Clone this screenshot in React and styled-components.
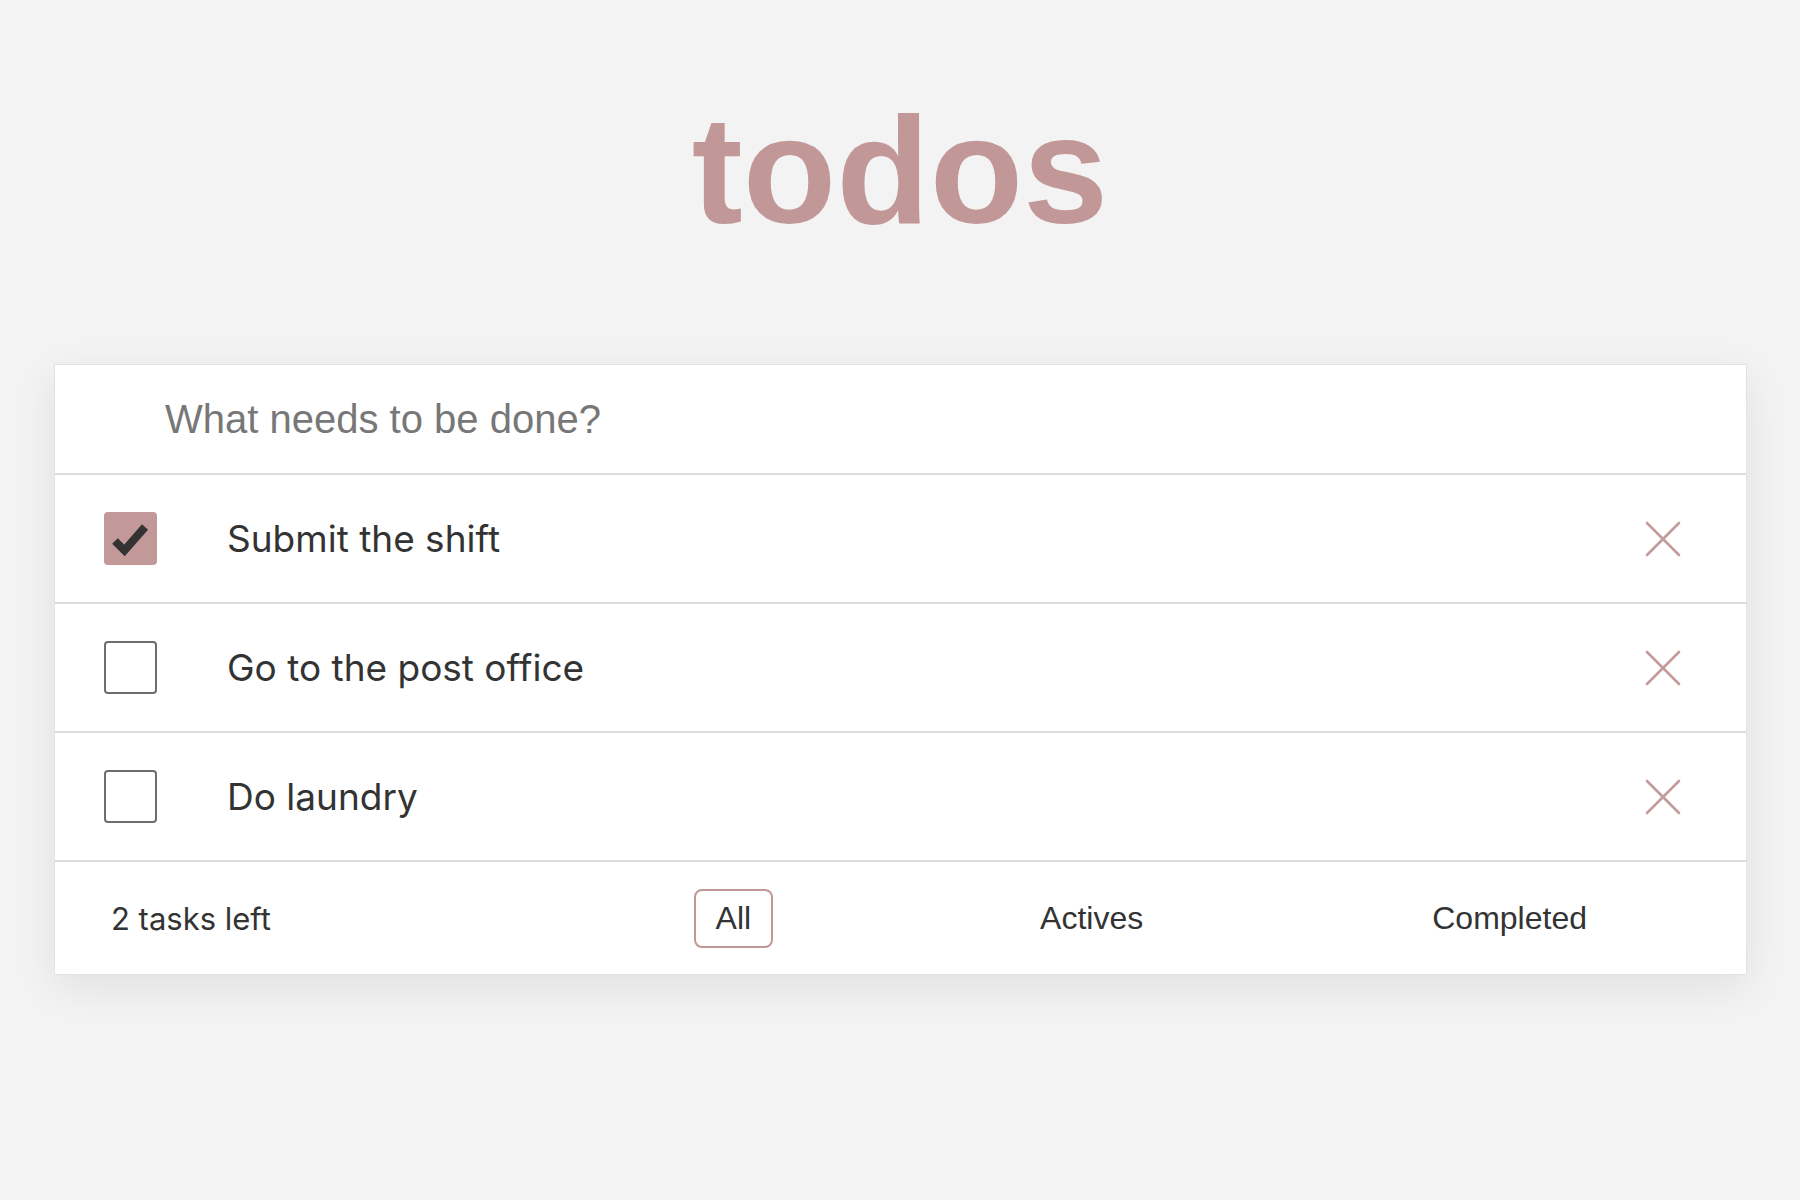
import React from "react";
import styled, { createGlobalStyle } from "styled-components";

const GlobalStyle = createGlobalStyle`
  html, body { margin: 0; padding: 0; background: #f3f3f3; }
  body { font-family: "Liberation Sans", Arial, sans-serif; }
  * { box-sizing: border-box; }
`;

const Page = styled.div`
  padding-top: 93px;
  min-height: 1200px;
`;

const Title = styled.h1`
  margin: 0;
  text-align: center;
  font-family: "Liberation Sans", Arial, sans-serif;
  font-weight: 700;
  font-size: 153px;
  line-height: 1;
  color: #c29797;
`;

const Card = styled.section`
  width: 1693px;
  margin: 118px 0 0 54px;
  background: #fff;
  border: 1px solid #e2e2e2;
  box-shadow: 0 12px 40px rgba(0, 0, 0, 0.08);
`;

const NewTodo = styled.input`
  display: block;
  width: 100%;
  height: 110px;
  border: none;
  border-bottom: 2px solid #dcdcdc;
  padding: 0 0 0 110px;
  font-family: "Liberation Sans", Arial, sans-serif;
  font-size: 40px;
  color: #333;
  outline: none;
  background: transparent;
  &::placeholder { color: #777; }
`;

const Row = styled.div`
  display: flex;
  align-items: center;
  height: 129px;
  border-bottom: 2px solid #dcdcdc;
  padding: 0 65px 0 49px;
`;

const Box = styled.span`
  flex: none;
  width: 53px;
  height: 53px;
  border-radius: 4px;
  border: ${(p) => (p.$checked ? "none" : "2px solid #6e6e6e")};
  background: ${(p) => (p.$checked ? "#c29898" : "#fff")};
  display: flex;
  align-items: center;
  justify-content: center;
`;

const Label = styled.span`
  flex: 1;
  margin-left: 70px;
  font-family: Inter, "Noto Sans", sans-serif;
  font-size: 37px;
  color: #333;
`;

const Remove = styled.button`
  flex: none;
  width: 36px;
  height: 36px;
  padding: 0;
  border: none;
  background: transparent;
  display: flex;
  align-items: center;
  justify-content: center;
  cursor: pointer;
`;

const Footer = styled.footer`
  display: flex;
  align-items: center;
  justify-content: space-between;
  height: 112px;
  padding: 0 137px 0 56px;
`;

const Count = styled.span`
  font-family: Inter, "Noto Sans", sans-serif;
  font-size: 31px;
  color: #333;
`;

const Filters = styled.div`
  display: flex;
  align-items: center;
  gap: 245px;
`;

const Filter = styled.button`
  font-family: "Liberation Sans", Arial, sans-serif;
  font-size: 32px;
  line-height: 37px;
  color: #333;
  background: transparent;
  padding: 9px 20px;
  border-radius: 8px;
  border: 2px solid ${(p) => (p.$active ? "#c29797" : "transparent")};
  cursor: pointer;
`;

const Check = () => (
  <svg width="53" height="53" viewBox="0 0 53 53">
    <polyline
      points="11,29 20.5,38.5 41,15"
      fill="none"
      stroke="#333"
      strokeWidth="8"
      strokeLinejoin="miter"
    />
  </svg>
);

const Cross = () => (
  <svg width="36" height="36" viewBox="0 0 36 36">
    <path
      d="M2 2 L34 34 M34 2 L2 34"
      stroke="#c49a9a"
      strokeWidth="2.6"
      strokeLinecap="round"
    />
  </svg>
);

const todos = [
  { id: 1, text: "Submit the shift", done: true },
  { id: 2, text: "Go to the post office", done: false },
  { id: 3, text: "Do laundry", done: false },
];

export default function App() {
  return (
    <Page>
      <GlobalStyle />
      <Title>todos</Title>
      <Card>
        <NewTodo placeholder="What needs to be done?" />
        {todos.map((t) => (
          <Row key={t.id}>
            <Box $checked={t.done}>{t.done && <Check />}</Box>
            <Label>{t.text}</Label>
            <Remove aria-label="remove">
              <Cross />
            </Remove>
          </Row>
        ))}
        <Footer>
          <Count>2 tasks left</Count>
          <Filters>
            <Filter $active>All</Filter>
            <Filter>Actives</Filter>
            <Filter>Completed</Filter>
          </Filters>
        </Footer>
      </Card>
    </Page>
  );
}
